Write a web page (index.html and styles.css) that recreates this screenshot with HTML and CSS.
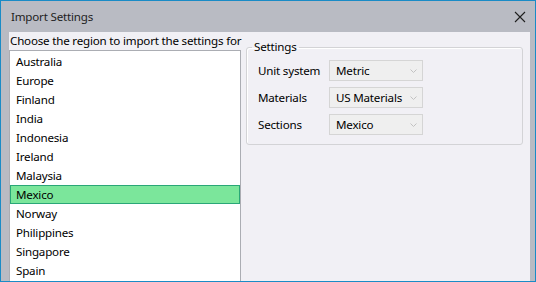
FILE: index.html
```html
<!DOCTYPE html>
<html lang="en">
<head>
    <meta charset="UTF-8">
    <title>Import Settings</title>
    <link rel="stylesheet" href="styles.css">
</head>
<body>
    <div class="window">
        <div class="titlebar">
            <span class="title">Import Settings</span>
            <svg class="close" width="12" height="12" viewBox="0 0 12 12">
                <path d="M1 1 L11 11 M11 1 L1 11" stroke="#1f1f1f" stroke-width="1.1" fill="none"/>
            </svg>
        </div>
        <div class="client">
            <div class="region-pane">
                <div class="caption">Choose the region to import the settings for</div>
                <ul class="region-list">
                    <li>Australia</li>
                    <li>Europe</li>
                    <li>Finland</li>
                    <li>India</li>
                    <li>Indonesia</li>
                    <li>Ireland</li>
                    <li>Malaysia</li>
                    <li class="selected">Mexico</li>
                    <li>Norway</li>
                    <li>Philippines</li>
                    <li>Singapore</li>
                    <li>Spain</li>
                </ul>
            </div>
            <fieldset class="settings">
                <legend>Settings</legend>
                <div class="settings-grid">
                    <span>Unit system</span>
                    <div class="combo">Metric<svg width="7" height="4" viewBox="0 0 7 4"><path d="M0.5 0.5 L3.5 3.5 L6.5 0.5" stroke="#c2c2c2" fill="none"/></svg></div>
                    <span>Materials</span>
                    <div class="combo">US Materials<svg width="7" height="4" viewBox="0 0 7 4"><path d="M0.5 0.5 L3.5 3.5 L6.5 0.5" stroke="#c2c2c2" fill="none"/></svg></div>
                    <span>Sections</span>
                    <div class="combo">Mexico<svg width="7" height="4" viewBox="0 0 7 4"><path d="M0.5 0.5 L3.5 3.5 L6.5 0.5" stroke="#c2c2c2" fill="none"/></svg></div>
                </div>
            </fieldset>
        </div>
    </div>
</body>
</html>
```

FILE: styles.css
```css
* {
    box-sizing: border-box;
}
body {
    margin: 0;
    font-family: "Noto Sans", sans-serif;
    font-size: 11.6px;
    letter-spacing: -0.2px;
    color: #000;
}
.window {
    width: 536px;
    height: 282px;
    border: 1px solid #1a8bc6;
    background-color: #b9bbc3;
    display: flex;
    flex-direction: column;
    overflow: hidden;
}
.titlebar {
    height: 31px;
    display: flex;
    align-items: center;
    justify-content: space-between;
    padding: 0 9px 0 10px;
    flex-shrink: 0;
}
.title {
    color: #1e1e1e;
}
.client {
    flex: 1;
    margin: 0 5px 0 8px;
    background-color: #f1f0f5;
    display: flex;
    align-items: flex-start;
    overflow: hidden;
}
.region-pane {
    width: 232px;
    flex-shrink: 0;
}
.caption {
    height: 18px;
    line-height: 18px;
    padding-left: 1px;
    white-space: nowrap;
}
.region-list {
    list-style: none;
    margin: 0;
    padding: 1px 0 0 0;
    background-color: #fff;
    border: 1px solid #abadb3;
    height: 260px;
}
.region-list li {
    height: 19px;
    line-height: 17px;
    padding-left: 5px;
    border: 1px solid transparent;
}
.region-list li.selected {
    background-color: #7be69b;
    border-color: #2aa777;
}
.settings {
    margin: 7px 7px 0 5px;
    padding: 0 11px 9px 11px;
    flex: 1;
    border: 1px solid #d3d3d6;
    border-radius: 3px;
    box-shadow: inset 1px 1px 0 #fff;
}
.settings legend {
    padding: 0 2px;
    margin-left: -6px;
    line-height: 16px;
}
.settings-grid {
    display: grid;
    grid-template-columns: 71px 94px;
    row-gap: 6px;
    align-items: center;
    padding-top: 5px;
}
.combo {
    height: 21px;
    background-color: #efefef;
    border: 1px solid #d5d5d5;
    display: flex;
    align-items: center;
    justify-content: space-between;
    padding: 0 5px 0 6px;
    white-space: nowrap;
}
```
